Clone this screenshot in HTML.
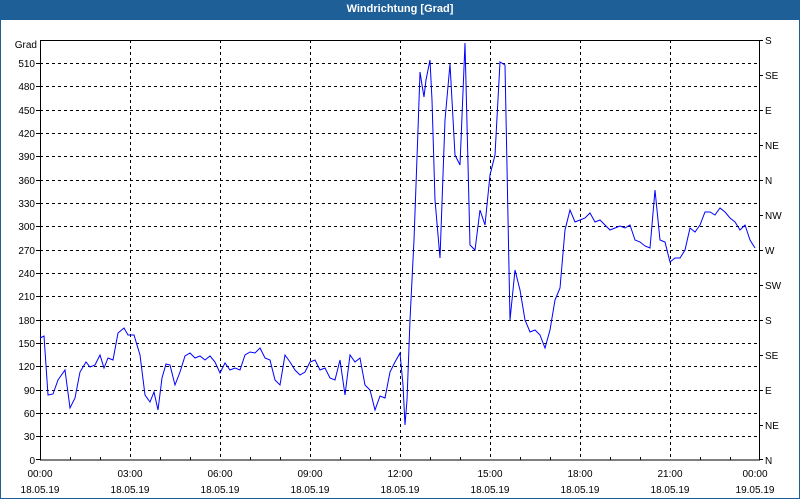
<!DOCTYPE html>
<html><head><style>
html,body{margin:0;padding:0;background:#fff}
body{width:800px;height:500px;position:relative;overflow:hidden;font-family:"Liberation Sans",sans-serif}
.title{position:absolute;left:0;top:0;width:800px;height:20px;background:#1e5f98;color:#fff;font-weight:bold;font-size:11px;text-align:center;line-height:19px}
.frame{position:absolute;left:0;top:20px;width:798px;height:478px;border:1px solid #1e5f98;border-top:none}
</style></head><body>
<div class="title">Windrichtung [Grad]</div>
<div class="frame"></div>
<svg width="800" height="500" style="position:absolute;left:0;top:0" font-family="Liberation Sans, sans-serif" font-size="10">
<g stroke="#000" stroke-width="1" stroke-dasharray="3,3" shape-rendering="crispEdges">
<line x1="40" x2="760" y1="63.5" y2="63.5"/><line x1="40" x2="760" y1="86.5" y2="86.5"/><line x1="40" x2="760" y1="110.5" y2="110.5"/><line x1="40" x2="760" y1="133.5" y2="133.5"/><line x1="40" x2="760" y1="156.5" y2="156.5"/><line x1="40" x2="760" y1="180.5" y2="180.5"/><line x1="40" x2="760" y1="203.5" y2="203.5"/><line x1="40" x2="760" y1="226.5" y2="226.5"/><line x1="40" x2="760" y1="250.5" y2="250.5"/><line x1="40" x2="760" y1="273.5" y2="273.5"/><line x1="40" x2="760" y1="296.5" y2="296.5"/><line x1="40" x2="760" y1="320.5" y2="320.5"/><line x1="40" x2="760" y1="343.5" y2="343.5"/><line x1="40" x2="760" y1="366.5" y2="366.5"/><line x1="40" x2="760" y1="390.5" y2="390.5"/><line x1="40" x2="760" y1="413.5" y2="413.5"/><line x1="40" x2="760" y1="436.5" y2="436.5"/>
<line y1="40" y2="460" x1="130.5" x2="130.5"/><line y1="40" y2="460" x1="220.5" x2="220.5"/><line y1="40" y2="460" x1="310.5" x2="310.5"/><line y1="40" y2="460" x1="400.5" x2="400.5"/><line y1="40" y2="460" x1="490.5" x2="490.5"/><line y1="40" y2="460" x1="580.5" x2="580.5"/><line y1="40" y2="460" x1="670.5" x2="670.5"/>
</g>
<g stroke="#000" shape-rendering="crispEdges">
<rect x="40.5" y="40.5" width="719" height="419.5" fill="none"/>
<path d="M70.5 460v-3M100.5 460v-3M160.5 460v-3M190.5 460v-3M250.5 460v-3M280.5 460v-3M340.5 460v-3M370.5 460v-3M430.5 460v-3M460.5 460v-3M520.5 460v-3M550.5 460v-3M610.5 460v-3M640.5 460v-3M700.5 460v-3M730.5 460v-3"/>
<path d="M36 63.5h4M36 86.5h4M36 110.5h4M36 133.5h4M36 156.5h4M36 180.5h4M36 203.5h4M36 226.5h4M36 250.5h4M36 273.5h4M36 296.5h4M36 320.5h4M36 343.5h4M36 366.5h4M36 390.5h4M36 413.5h4M36 436.5h4M36 459.5h4"/>
<path d="M760 75.5h3M760 110.5h3M760 145.5h3M760 180.5h3M760 215.5h3M760 250.5h3M760 285.5h3M760 320.5h3M760 355.5h3M760 390.5h3M760 425.5h3M760 459.5h3M760 40.5h3"/>
</g>
<g text-anchor="end">
<text x="37" y="48">Grad</text>
<text x="35" y="67">510</text><text x="35" y="90">480</text><text x="35" y="114">450</text><text x="35" y="137">420</text><text x="35" y="160">390</text><text x="35" y="184">360</text><text x="35" y="207">330</text><text x="35" y="230">300</text><text x="35" y="254">270</text><text x="35" y="277">240</text><text x="35" y="300">210</text><text x="35" y="324">180</text><text x="35" y="347">150</text><text x="35" y="370">120</text><text x="35" y="394">90</text><text x="35" y="417">60</text><text x="35" y="440">30</text><text x="35" y="464">0</text>
</g>
<g>
<text x="765" y="44">S</text><text x="765" y="79">SE</text><text x="765" y="114">E</text><text x="765" y="149">NE</text><text x="765" y="184">N</text><text x="765" y="219">NW</text><text x="765" y="254">W</text><text x="765" y="289">SW</text><text x="765" y="324">S</text><text x="765" y="359">SE</text><text x="765" y="394">E</text><text x="765" y="429">NE</text><text x="765" y="464">N</text>
</g>
<g text-anchor="middle">
<text x="40" y="477">00:00</text><text x="40" y="493">18.05.19</text>
<text x="130" y="477">03:00</text><text x="130" y="493">18.05.19</text>
<text x="220" y="477">06:00</text><text x="220" y="493">18.05.19</text>
<text x="310" y="477">09:00</text><text x="310" y="493">18.05.19</text>
<text x="400" y="477">12:00</text><text x="400" y="493">18.05.19</text>
<text x="490" y="477">15:00</text><text x="490" y="493">18.05.19</text>
<text x="580" y="477">18:00</text><text x="580" y="493">18.05.19</text>
<text x="670" y="477">21:00</text><text x="670" y="493">18.05.19</text>
<text x="755" y="477">00:00</text><text x="755" y="493">19.05.19</text>
</g>
<polyline fill="none" stroke="#0000ff" stroke-width="1" points="40,338 44,336 48,395 53,394 58,380 65,370 70,408 75,398 80,372 86,362 90,367 95,365 100,355 104,368 108,358 113,360 118,333 124,328 128,335 134,335 140,355 145,395 150,402 154,392 158,410 162,378 166,364 170,365 175,385 180,372 185,356 190,353 195,358 200,356 205,360 210,356 215,362 220,373 225,363 230,370 235,368 240,370 245,355 250,352 255,353 260,348 265,358 270,360 275,380 280,385 285,355 290,362 295,370 300,375 305,372 310,362 315,360 320,370 325,368 330,378 335,380 340,360 345,395 350,355 355,362 360,358 365,385 370,390 375,410 380,396 385,398 390,372 395,362 400,353 403,385 405,425 407,400 410,320 414,240 418,130 420,72 422,85 424,97 426,80 430,60 432,100 435,200 440,258 445,120 450,64 455,155 460,165 465,43 470,245 475,250 480,210 485,225 490,175 495,155 500,62 505,65 510,320 515,270 520,290 525,320 530,332 535,330 540,335 545,348 550,330 555,300 560,288 565,230 570,210 575,222 580,220 585,218 590,213 595,222 600,220 605,225 610,230 615,228 620,226 625,228 630,225 635,240 640,242 645,246 650,248 655,190 660,240 665,242 670,262 675,258 680,258 685,250 690,228 695,232 700,225 705,212 710,212 715,215 720,208 725,212 730,218 735,222 740,230 745,225 750,240 755,248"/>
</svg>
</body></html>
